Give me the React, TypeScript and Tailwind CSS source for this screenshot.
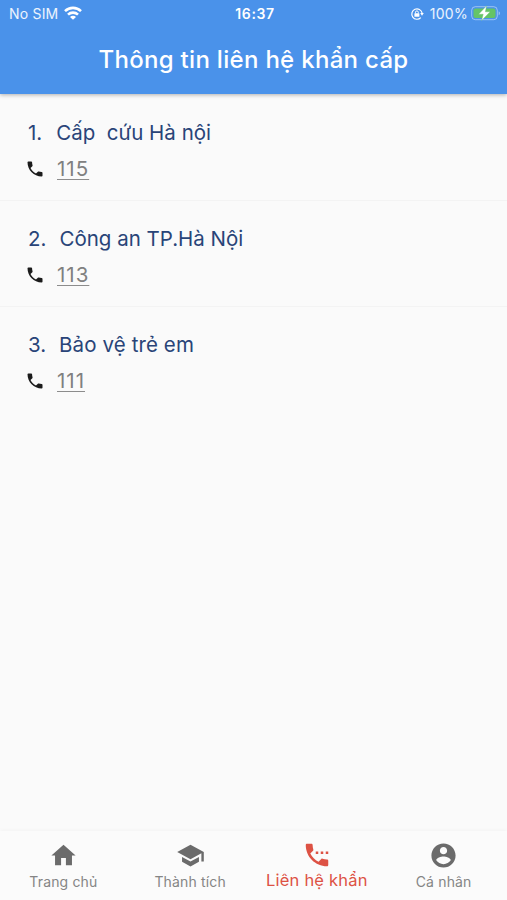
const CALL =
  'M6.62 10.79c1.44 2.83 3.76 5.14 6.59 6.59l2.2-2.2c.27-.27.67-.36 1.02-.24 1.12.37 2.33.57 3.57.57.55 0 1 .45 1 1V20c0 .55-.45 1-1 1-9.39 0-17-7.61-17-17 0-.55.45-1 1-1h3.5c.55 0 1 .45 1 1 0 1.25.2 2.45.57 3.57.11.35.03.74-.25 1.02l-2.2 2.2z';
const HOME = 'M10 20v-6h4v6h5v-8h3L12 3 2 12h3v8z';
const SCHOOL = 'M5 13.18v4L12 21l7-3.82v-4L12 17l-7-3.82zM12 3L1 9l11 6 9-4.91V17h2V9L12 3z';
const CALL_DOTS = CALL + 'M11 9.2h2v2h-2zM15 9.2h2v2h-2zM19 9.2h2v2h-2z';
const ACCOUNT =
  'M12 2C6.48 2 2 6.48 2 12s4.48 10 10 10 10-4.48 10-10S17.52 2 12 2zm0 3c1.66 0 3 1.34 3 3s-1.34 3-3 3-3-1.34-3-3 1.34-3 3-3zm0 14.2c-2.5 0-4.71-1.28-6-3.22.03-1.99 4-3.08 6-3.08 1.99 0 5.97 1.09 6 3.08-1.29 1.94-3.5 3.22-6 3.22z';

function Icon({ d, className }: { d: string; className: string }) {
  return (
    <svg viewBox="0 0 24 24" fill="currentColor" className={className}>
      <path d={d} />
    </svg>
  );
}

function StatusBar() {
  return (
    <div className="grid h-7 grid-cols-3 items-center pl-[9px] pr-[6px] text-sm leading-none text-white/90">
      <div className="flex items-center gap-[6px]">
        <span className="tracking-[0.2px]">No SIM</span>
        <svg viewBox="0 0 18 14" className="-mt-[2px] h-[14px] w-[18px]" fill="none" stroke="white" strokeWidth="2.6">
          <path d="M1 5.1a11.6 11.6 0 0 1 16 0" />
          <path d="M4 8.6a7.2 7.2 0 0 1 10 0" />
          <path d="M9 13.8 6 10.9a4.2 4.2 0 0 1 6 0z" fill="white" stroke="none" />
        </svg>
      </div>
      <span className="text-center font-semibold tracking-[0.6px] text-white">16:37</span>
      <div className="flex items-center justify-end">
        <svg viewBox="0 0 14 14" className="mr-[6px] h-[14px] w-[14px]" fill="none" stroke="white">
          <path d="M10.8 10.6A5.2 5.2 0 1 1 12.1 6" strokeWidth="1.2" />
          <path d="M10.2 6h3.6l-1.8 2.8z" fill="white" stroke="none" />
          <rect x="4.4" y="6.2" width="5" height="3.6" rx="0.5" fill="white" stroke="none" />
          <path d="M5.5 6.4V5.3a1.4 1.4 0 0 1 2.8 0v1.1" strokeWidth="1" />
        </svg>
        <span className="tracking-[0.3px]">100%</span>
        <svg viewBox="0 0 30 16" className="-mt-[2px] ml-[3px] h-4 w-[30px]">
          <rect x="0.7" y="1.7" width="25.6" height="13" rx="3.6" fill="none" stroke="white" strokeOpacity="0.45" />
          <rect x="2.5" y="3.5" width="22" height="9.4" rx="2" fill="#65c466" />
          <path d="M27.7 6.2c1.6.6 1.6 3.4 0 4z" fill="white" fillOpacity="0.5" />
          <path
            d="M15.6 0.8 7.6 9.2h4.6L10.6 15.4l8.6-8.6h-4.8z"
            fill="white"
            stroke="#65c466"
            strokeWidth="0.4"
          />
        </svg>
      </div>
    </div>
  );
}

function Contact({ index, name, phone, nameClass }: { index: number; name: string; phone: string; nameClass: string }) {
  return (
    <li className="h-[106px] border-b border-[#f3f3f3] pl-[25px] pt-[23px] last:border-transparent">
      <div className="flex h-[30px] items-center pl-[3px] text-[20.5px] text-[#294478]">
        <span>{index}.</span>
        <span className={nameClass}>{name}</span>
      </div>
      <div className="mt-[6px] flex h-[30px] items-center text-[#1b1b1b]">
        <Icon d={CALL} className="h-5 w-5" />
        <a className="ml-3 text-[20.5px] tracking-[1px] text-[#808080] underline decoration-[#8c8c8c] decoration-1 underline-offset-[3px]">
          {phone}
        </a>
      </div>
    </li>
  );
}

function Tab({ d, label, active }: { d: string; label: string; active?: boolean }) {
  return (
    <div
      className={
        active
          ? 'flex flex-1 flex-col items-center pt-[9px] text-[#dd5244]'
          : 'flex flex-1 flex-col items-center pt-[10px] text-[#6b6b6b]'
      }
    >
      <Icon d={d} className={active ? 'h-[30px] w-[30px]' : 'h-[29px] w-[29px]'} />
      <span
        className={
          active
            ? 'whitespace-nowrap text-[16.5px] leading-5 tracking-[0.2px]'
            : 'mt-[2px] whitespace-nowrap text-[14px] leading-5 tracking-[0.15px] text-[#858585]'
        }
      >
        {label}
      </span>
    </div>
  );
}

export default function App() {
  return (
    <div className="flex h-[900px] w-[507px] flex-col overflow-hidden bg-[#fafafa] font-['Inter','Noto_Sans',sans-serif]">
      <header className="z-10 h-[94px] shrink-0 bg-[#4a92ea] shadow-[0_1px_4px_rgba(0,0,0,0.3)]">
        <StatusBar />
        <h1 className="flex h-16 items-center justify-center whitespace-nowrap text-[24px] font-medium tracking-[0.3px] text-white">
          Thông tin liên hệ khẩn cấp
        </h1>
      </header>
      <ul className="flex-1 pt-px">
        <Contact index={1} name="Cấp  cứu Hà nội" phone="115" nameClass="ml-[14px] whitespace-pre" />
        <Contact index={2} name="Công an TP.Hà Nội" phone="113" nameClass="ml-[13px] whitespace-pre" />
        <Contact index={3} name="Bảo vệ trẻ em" phone="111" nameClass="ml-[13px] whitespace-pre tracking-[0.1px]" />
      </ul>
      <nav className="flex h-[69px] shrink-0 bg-[#fbfbfb] shadow-[0_-1px_4px_rgba(0,0,0,0.03)]">
        <Tab d={HOME} label="Trang chủ" />
        <Tab d={SCHOOL} label="Thành tích" />
        <Tab d={CALL_DOTS} label="Liên hệ khẩn" active />
        <Tab d={ACCOUNT} label="Cá nhân" />
      </nav>
    </div>
  );
}
